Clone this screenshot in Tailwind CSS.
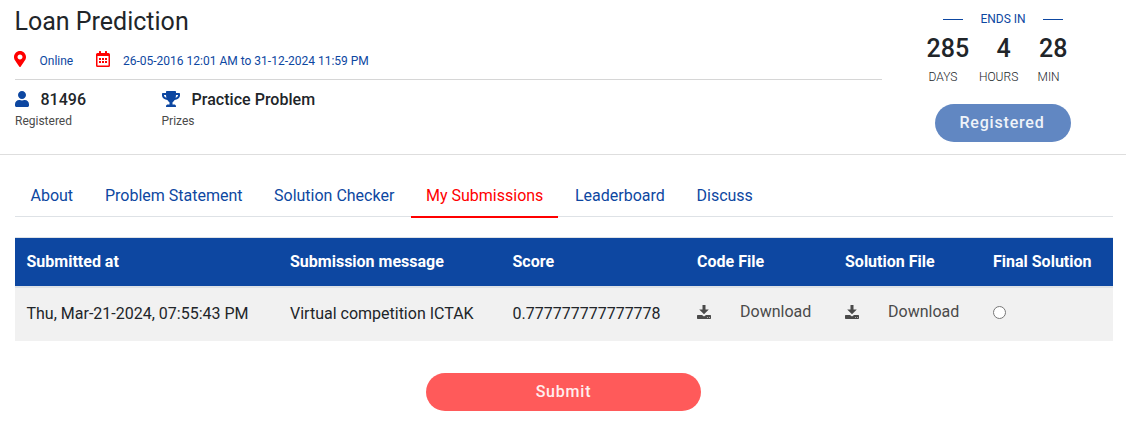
<!DOCTYPE html>
<html lang="en">
<head>
<meta charset="utf-8">
<title>Loan Prediction</title>
<script src="https://cdn.jsdelivr.net/npm/@tailwindcss/browser@4"></script>
</head>
<body class="bg-white font-['Roboto',sans-serif] text-base text-[#212529]">
<header class="flex h-[155px] border-b border-[#dedede] pl-[15px]">
  <div class="w-[867px]">
    <h1 class="-ml-[0.5px] h-9 pt-[7px] text-[25px] leading-[30px] whitespace-nowrap">Loan Prediction</h1>
    <div class="flex h-[44px] items-center border-b border-[#d6d6d6] pt-[2px] text-[12px] text-[#0d47a1]">
      <svg class="h-4 w-3 -ml-px" viewBox="0 0 384 512" fill="#f00"><path d="M172.268 501.67C26.97 291.031 0 269.413 0 192 0 85.961 85.961 0 192 0s192 85.961 192 192c0 77.413-26.97 99.031-172.268 309.67-9.535 13.774-29.93 13.773-39.464 0zM192 272c44.183 0 80-35.817 80-80s-35.817-80-80-80-80 35.817-80 80 35.817 80 80 80z"/></svg>
      <span class="ml-[13.5px] w-[56.5px] pt-[4px]">Online</span>
      <svg class="h-4 w-[14px]" viewBox="0 0 14 16" fill="#f00"><path fill-rule="evenodd" d="M3 .4Q3 0 3.400 0h1.200Q5 0 5 .4V2h4V.4Q9 0 9.400 0h1.200Q11 0 11 .4V2h1.500Q14 2 14 3.500v11q0 1.500-1.500 1.500h-11Q0 16 0 14.500v-11Q0 2 1.500 2H3zM1.500 5v9.500h11V5zM3 7h2v2H3zm3 0h2v2H6zm3 0h2v2H9zm-6 3h2v2H3zm3 0h2v2H6zm3 0h2v2H9z"/></svg>
      <span class="ml-[13px] pt-[4px]">26-05-2016 12:01 AM to 31-12-2024 11:59 PM</span>
    </div>
    <div class="flex pt-[10px]">
      <div class="w-[147px]">
        <div class="flex h-[19px] items-center font-medium">
          <svg class="-mt-px h-4 w-[14px]" viewBox="0 0 448 512" fill="#0d47a1"><path d="M224 256c70.700 0 128-57.300 128-128S294.700 0 224 0 96 57.300 96 128s57.300 128 128 128zm89.600 32h-16.700c-22.200 10.200-46.900 16-72.900 16s-50.600-5.800-72.900-16h-16.700C60.200 288 0 348.200 0 422.400V464c0 26.500 21.500 48 48 48h352c26.500 0 48-21.500 48-48v-41.600c0-74.200-60.200-134.400-134.400-134.400z"/></svg>
          <span class="ml-[11.5px]">81496</span>
        </div>
        <div class="mt-[3px] text-[12px] leading-[18px] text-[#4a4a4a]">Registered</div>
      </div>
      <div class="-ml-[0.5px]">
        <div class="flex h-[19px] items-center font-medium">
          <svg class="-mt-px h-4 w-[18px]" viewBox="0 0 576 512" fill="#0d47a1"><path d="M552 64H448V24c0-13.300-10.700-24-24-24H152c-13.300 0-24 10.700-24 24v40H24C10.700 64 0 74.700 0 88v56c0 35.700 22.500 72.400 61.900 100.700 31.500 22.700 69.800 37.100 110 41.700C203.300 338.500 240 360 240 360v72h-48c-35.300 0-64 20.700-64 56v12c0 6.600 5.400 12 12 12h296c6.600 0 12-5.400 12-12v-12c0-35.300-28.700-56-64-56h-48v-72s36.700-21.500 68.100-73.600c40.300-4.600 78.600-19 110-41.700 39.300-28.300 61.900-65 61.900-100.700V88c0-13.300-10.700-24-24-24zM99.300 192.800C74.900 175.200 64 155.600 64 144v-16h64.200c1 32.600 5.800 61.200 12.800 86.200-15.100-5.200-29.200-12.400-41.700-21.400zM512 144c0 16.100-17.700 36.100-35.300 48.800-12.500 9-26.700 16.200-41.800 21.400 7-25 11.800-53.600 12.800-86.200H512v16z"/></svg>
          <span class="ml-3 tracking-[0.03px]">Practice Problem</span>
        </div>
        <div class="mt-[3px] text-[12px] leading-[18px] text-[#4a4a4a]">Prizes</div>
      </div>
    </div>
  </div>
  <div class="ml-[44px] w-[160px] pt-[10px]">
    <div class="ml-[17px] flex h-[18px] w-[120px] items-center justify-between text-[12px] text-[#0d47a1]">
      <span class="h-px w-5 bg-[#0d47a1]"></span><span>ENDS IN</span><span class="h-px w-5 bg-[#0d47a1]"></span>
    </div>
    <div class="flex h-[40px] items-center pt-[2px] pl-[0.5px] text-[25px] font-medium">
      <span class="w-[70px]">285</span><span class="w-[42.5px]">4</span><span>28</span>
    </div>
    <div class="flex h-[18px] items-center text-[12px] font-light">
      <span class="ml-[2.5px] w-[50.5px]">DAYS</span><span class="w-[58.5px]">HOURS</span><span>MIN</span>
    </div>
    <button class="mt-[18px] ml-[9px] block h-[38px] w-[136px] rounded-full bg-[#6187c2] pr-[2px] text-center font-medium tracking-[0.8px] text-[#eff3f9]">Registered</button>
  </div>
</header>
<main class="px-[15px] pr-[13px]">
  <nav class="mt-5 flex h-[42px] border-b border-[#dee2e6] leading-6 text-[#0d47a1]">
    <a class="w-[75px] pt-[9px] pl-[15.5px]">About</a>
    <a class="w-[169px] pt-[9px] pl-[15px]">Problem Statement</a>
    <a class="w-[152px] pt-[9px] pl-[15px]">Solution Checker</a>
    <a class="h-[43px] w-[147px] border-b-2 border-[#f00] pt-[9px] pl-[15px] whitespace-nowrap text-[#f00]">My Submissions</a>
    <a class="w-[122px] pt-[9px] pl-[17px]">Leaderboard</a>
    <a class="pt-[9px] pl-[16.5px]">Discuss</a>
  </nav>
  <table class="mt-5 w-full table-fixed border-collapse text-left">
    <colgroup><col class="w-[263px]"><col class="w-[223px]"><col class="w-[184px]"><col class="w-[148px]"><col class="w-[148px]"><col></colgroup>
    <thead>
      <tr class="h-[49px] border-t border-b-2 border-[#dee2e6] bg-[#0d47a1] text-white">
        <th class="pl-[11.5px]">Submitted at</th><th class="pl-3">Submission message</th><th class="pl-[11.5px]">Score</th><th class="pl-3">Code File</th><th class="pl-3">Solution File</th><th class="pl-3">Final Solution</th>
      </tr>
    </thead>
    <tbody>
      <tr class="h-[54px] bg-[#f1f1f1]">
        <td class="pl-[11.5px]">Thu, Mar-21-2024, 07:55:43 PM</td>
        <td class="pl-3">Virtual competition ICTAK</td>
        <td class="pl-[11.5px]">0.777777777777778</td>
        <td class="pl-3"><div class="flex items-center pb-[4px] text-[#4a4a4a]"><svg class="mr-[29px] h-[14px] w-[14px]" viewBox="0 0 14 14" fill="currentColor"><path d="M5.500 0h3v4.500h3.300L7 9.300 2.200 4.500h3.300zM0 10.700q0-.7.700-.7h4.300L7 11.500 9 10h4.300q.7 0 .7.700v2.500q0 .8-.7.800H.7q-.7 0-.7-.8zm10.200 1.600v.6h.8v-.6zm1.800 0v.6h.8v-.6z"/></svg>Download</div></td>
        <td class="pl-3"><div class="flex items-center pb-[4px] text-[#4a4a4a]"><svg class="mr-[29px] h-[14px] w-[14px]" viewBox="0 0 14 14" fill="currentColor"><path d="M5.500 0h3v4.500h3.300L7 9.300 2.200 4.500h3.300zM0 10.700q0-.7.700-.7h4.300L7 11.500 9 10h4.300q.7 0 .7.700v2.500q0 .8-.7.800H.7q-.7 0-.7-.8zm10.200 1.600v.6h.8v-.6zm1.800 0v.6h.8v-.6z"/></svg>Download</div></td>
        <td class="pl-3"><input type="radio" class="mb-[4px] block h-[13px] w-[13px]"></td>
      </tr>
    </tbody>
  </table>
  <button class="mt-8 ml-[411px] block h-[38px] w-[275px] rounded-full bg-[#ff5a5a] text-center font-medium tracking-[0.8px] text-[#ffeeee]">Submit</button>
</main>
</body>
</html>
